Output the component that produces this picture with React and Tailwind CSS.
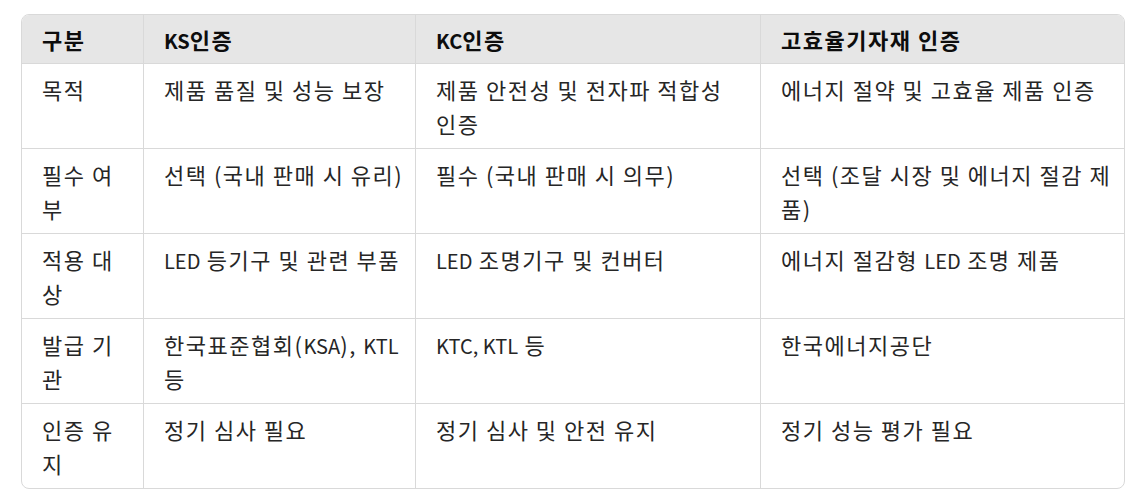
import React from "react";

const headers = ["구분", "KS인증", "KC인증", "고효율기자재 인증"];

const rows = [
  [["목적"], ["제품 품질 및 성능 보장"], ["제품 안전성 및 전자파 적합성", "인증"], ["에너지 절약 및 고효율 제품 인증"]],
  [["필수 여", "부"], ["선택 (국내 판매 시 유리)"], ["필수 (국내 판매 시 의무)"], ["선택 (조달 시장 및 에너지 절감 제", "품)"]],
  [["적용 대", "상"], ["LED 등기구 및 관련 부품"], ["LED 조명기구 및 컨버터"], ["에너지 절감형 LED 조명 제품"]],
  [["발급 기", "관"], ["한국표준협회(KSA), KTL", "등"], ["KTC, KTL 등"], ["한국에너지공단"]],
  [["인증 유", "지"], ["정기 심사 필요"], ["정기 심사 및 안전 유지"], ["정기 성능 평가 필요"]],
];

function Text({ s }) {
  const parts = s.split(/([A-Za-z]+(?:[,)]? ?[A-Za-z]+)*)/);
  return parts.map((p, i) =>
    /[A-Za-z]/.test(p) ? (
      <span key={i} className="text-[20px] leading-none tracking-normal">
        {p}
      </span>
    ) : (
      <React.Fragment key={i}>{p}</React.Fragment>
    )
  );
}

function Lines({ lines }) {
  return lines.map((l, i) => (
    <div key={i} className="h-[34px] whitespace-nowrap">
      <Text s={l} />
    </div>
  ));
}

export default function App() {
  return (
    <div
      className="min-h-[496px] w-[1146px] bg-white pt-[14px] pl-[21px]"
      style={{ fontFamily: '"Noto Sans CJK KR", "Noto Sans", sans-serif' }}
    >
      <div className="w-[1104px] overflow-hidden rounded-lg border border-[#d9d9d9]">
        <div className="grid grid-cols-[122px_272px_345px_1fr] text-[22px] leading-[34px] tracking-[1.5px]">
          {headers.map((h, i) => (
            <div
              key={h}
              className={
                "h-[49px] border-b border-[#d9d9d9] bg-[#e6e6e6] px-5 py-[7px] font-bold text-[#0d0d0d] " +
                (i < 3 ? "border-r" : "")
              }
            >
              <div className="h-[34px] whitespace-nowrap">
                <Text s={h} />
              </div>
            </div>
          ))}
          {rows.map((r, ri) =>
            r.map((c, ci) => (
              <div
                key={ri + "-" + ci}
                className={
                  "border-[#d9d9d9] px-5 py-2 text-[#262626] " +
                  (ci < 3 ? "border-r " : "") +
                  (ri < rows.length - 1 ? "border-b" : "")
                }
              >
                <Lines lines={c} />
              </div>
            ))
          )}
        </div>
      </div>
    </div>
  );
}
